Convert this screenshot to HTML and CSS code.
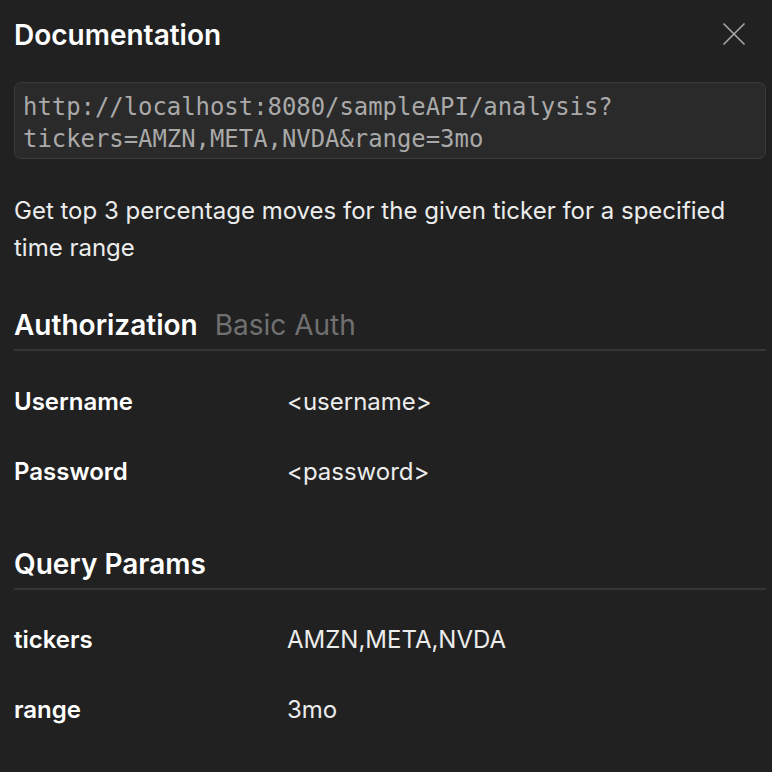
FILE: index.html
```html
<!DOCTYPE html>
<html>
<head>
<meta charset="utf-8">
<link rel="stylesheet" href="styles.css">
</head>
<body>
<div class="panel">
  <div class="header">
    <h1 class="title">Documentation</h1>
    <button class="close" aria-label="Close">
      <svg width="24" height="24" viewBox="0 0 24 24"><path d="M1.5 1.5 L22.5 22.5 M22.5 1.5 L1.5 22.5" stroke="#a8a8a8" stroke-width="1.6" fill="none"/></svg>
    </button>
  </div>
  <div class="url">http://localhost:8080/sampleAPI/analysis?<br>tickers=AMZN,META,NVDA&amp;range=3mo</div>
  <p class="desc">Get top 3 percentage moves for the given ticker for a specified time range</p>

  <div class="section-head">
    <h2 class="section-title">Authorization</h2>
    <span class="section-sub">Basic Auth</span>
  </div>
  <div class="rows">
    <div class="row"><span class="key">Username</span><span class="val">&lt;username&gt;</span></div>
    <div class="row"><span class="key">Password</span><span class="val">&lt;password&gt;</span></div>
  </div>

  <div class="section-head section-next">
    <h2 class="section-title">Query Params</h2>
  </div>
  <div class="rows rows-last">
    <div class="row"><span class="key">tickers</span><span class="val">AMZN,META,NVDA</span></div>
    <div class="row"><span class="key">range</span><span class="val">3mo</span></div>
  </div>
</div>
</body>
</html>
```

FILE: styles.css
```css
html, body {
  margin: 0;
  padding: 0;
  background: #212121;
}
body {
  font-family: Inter, "Noto Sans", sans-serif;
  color: #f2f2f2;
}
.panel {
  padding: 14px 6px 0 14px;
}
.header {
  display: flex;
  justify-content: space-between;
  align-items: center;
  height: 40px;
}
.title {
  margin: 0;
  font-size: 28px;
  font-weight: 600;
  line-height: 40px;
  color: #ffffff;
  padding-top: 1px;
}
.close {
  background: none;
  border: 0;
  padding: 0;
  margin-right: 20px;
  width: 24px;
  height: 24px;
  display: flex;
}
.url {
  margin-top: 28px;
  background: #2a2a2a;
  border: 1px solid #3a3a3a;
  border-radius: 7px;
  padding: 8px 8px 3px 8px;
  font-family: "DejaVu Sans Mono", "Liberation Mono", monospace;
  font-size: 23.9px;
  line-height: 32px;
  color: #a9a9a9;
}
.desc {
  margin: 33px 0 0 0;
  font-size: 24px;
  line-height: 37px;
  color: #ececec;
}
.section-head {
  display: flex;
  align-items: baseline;
  gap: 17px;
  margin-top: 41px;
  padding-bottom: 6px;
  border-bottom: 2px solid #353535;
}
.section-next {
  margin-top: 40px;
}
.section-title {
  margin: 0;
  font-size: 28px;
  font-weight: 600;
  line-height: 36px;
  color: #ffffff;
}
.section-sub {
  font-size: 28px;
  line-height: 36px;
  color: #707070;
}
.rows {
  padding-top: 15px;
}
.rows-last {
  padding-top: 14px;
}
.row {
  display: flex;
  align-items: center;
  height: 70px;
}
.key {
  width: 273px;
  font-size: 24px;
  font-weight: 600;
  color: #ffffff;
}
.val {
  font-size: 24px;
  color: #ececec;
}
```
